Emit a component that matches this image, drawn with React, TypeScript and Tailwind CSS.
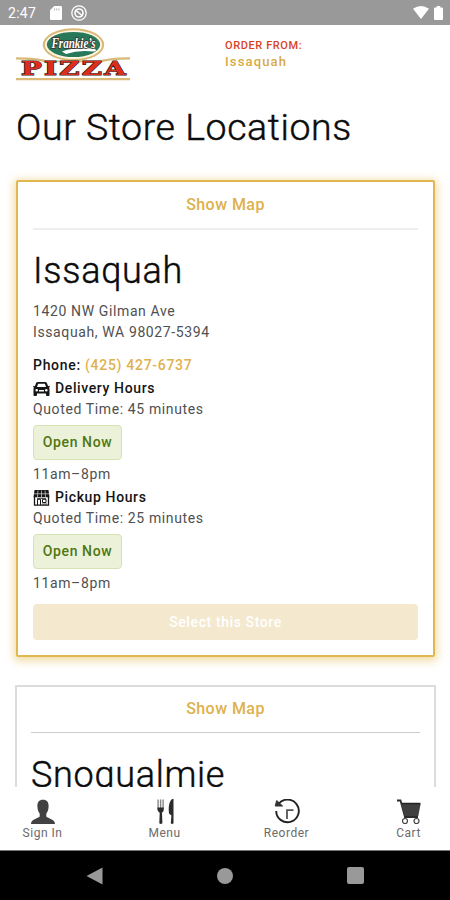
import type { ReactNode } from 'react';

type Service = {
  kind: 'delivery' | 'pickup';
  label: string;
  quoted: string;
  hours: string;
};

type Store = {
  name: string;
  address: string[];
  phone: string;
  services: Service[];
};

const issaquah: Store = {
  name: 'Issaquah',
  address: ['1420 NW Gilman Ave', 'Issaquah, WA 98027-5394'],
  phone: '(425) 427-6737',
  services: [
    { kind: 'delivery', label: 'Delivery Hours', quoted: '45 minutes', hours: '11am–8pm' },
    { kind: 'pickup', label: 'Pickup Hours', quoted: '25 minutes', hours: '11am–8pm' },
  ],
};

const StatusBar = () => (
  <div className="flex h-[25px] shrink-0 items-center bg-[#999999] px-2 text-white">
    <span className="w-[42px] text-[14px] leading-none tracking-[0.3px]">2:47</span>
    <svg className="h-[14px] w-[12px]" viewBox="0 0 12 14">
      <path d="M4.2 0H10.8Q12 0 12 1.2V12.8Q12 14 10.8 14H1.2Q0 14 0 12.8V4.2Z" fill="currentColor" />
      <path d="M4.5 2.4v2M6.7 2.4v2M8.9 2.4v2" stroke="#b5b5b5" strokeWidth="1" />
    </svg>
    <svg className="ml-[9px] h-4 w-4" viewBox="0 0 16 16" fill="none" stroke="currentColor">
      <circle cx="8" cy="8" r="7.2" strokeWidth="1.3" />
      <circle cx="8" cy="8" r="4" strokeWidth="1.6" />
      <path d="M4.5 5l7 6" strokeWidth="1.6" />
    </svg>
    <svg className="ml-auto h-[13px] w-4" viewBox="0 0 16 13">
      <path d="M0 2.8Q8-2.8 16 2.8L8 13Z" fill="currentColor" />
    </svg>
    <svg className="mr-[-1px] ml-[5px] h-[14px] w-[9px]" viewBox="0 0 9 14">
      <path d="M2.7 0H6.3V1.5H8Q9 1.5 9 2.5V13Q9 14 8 14H1Q0 14 0 13V2.5Q0 1.5 1 1.5H2.7Z" fill="currentColor" />
    </svg>
  </div>
);

const Logo = () => (
  <svg className="h-[54px] w-[114px]" viewBox="0 0 114 54">
    <ellipse cx="57.5" cy="16.7" rx="30.7" ry="16.4" fill="#d9b878" />
    <ellipse cx="57.5" cy="16.7" rx="28.6" ry="14.4" fill="#fff7e2" />
    <ellipse cx="57.5" cy="16.5" rx="26.7" ry="12.6" fill="#28785a" />
    <path d="M0 29.2Q24 29.5 31 32.5H84Q91 29.5 114 29.2V31.6Q94 32 86 34.2H29Q20 32 0 31.6Z" fill="#d9b878" />
    <path d="M46 23.5Q56 19.5 78 20.5Q82 22.5 78 23.5Q63 21.5 50 26Z" fill="#fff" />
    <text
      x="57.5" y="19.5" textAnchor="middle" fontSize="14" fontStyle="italic" fontWeight="700"
      fontFamily="Liberation Serif, serif" textLength="44" lengthAdjust="spacingAndGlyphs"
      fill="#fff" stroke="#40302d" strokeWidth="1.6" paintOrder="stroke"
    >
      Frankie’s
    </text>
    <text
      x="58.5" y="47" textAnchor="middle" fontSize="18.5" fontWeight="700" letterSpacing="1.6"
      fontFamily="DejaVu Serif, serif" textLength="107" lengthAdjust="spacingAndGlyphs"
      fill="#dd2e1d" stroke="#3a2220" strokeWidth="1.2" paintOrder="stroke"
    >
      PIZZA
    </text>
    <path d="M0 50H114V52.3H0Z" fill="#d9b878" />
  </svg>
);

const CarIcon = () => (
  <svg className="h-4 w-[17px]" viewBox="0 0 17 16">
    <path
      fillRule="evenodd"
      d="M5 1H12Q13.6 1 14.1 2.4L15.1 5.2L16.7 4.7V6.2L15.9 6.7Q16.5 7.5 16.5 8.5V14Q16.5 15 15.5 15H14Q13 15 13 14V12.6H4V14Q4 15 3 15H1.5Q.5 15 .5 14V8.5Q.5 7.5 1.1 6.7L.3 6.2V4.7L1.9 5.2L2.9 2.4Q3.4 1 5 1ZM5.1 2.7L4 6H13L11.9 2.7ZM3.7 8A1.3 1.3 0 1 0 3.7 10.6A1.3 1.3 0 1 0 3.7 8ZM13.3 8A1.3 1.3 0 1 0 13.3 10.6A1.3 1.3 0 1 0 13.3 8ZM6 9V10.6H11V9Z"
      fill="#161616"
    />
  </svg>
);

const ShopIcon = () => (
  <svg className="h-4 w-[17px]" viewBox="0 0 17 16" fill="none" stroke="#161616">
    <path d="M1.5 0H15.5L16.5 7.2H.5Z" fill="#161616" stroke="none" />
    <path d="M5 .5L4.4 7M8.5 .5V7M12 .5L12.6 7M1 3.8H16" stroke="#c6c6c6" strokeWidth=".8" />
    <path d="M1.5 7V15.2H15.5V7" strokeWidth="1.3" />
    <path d="M4.5 15V9.3H7.5V15M9.5 9.3H13V12.5H9.5Z" strokeWidth="1" />
    <path d="M4 8.5H13M9 14H14" strokeWidth=".7" />
  </svg>
);

const OpenBadge = () => (
  <div className="mt-[5px] mb-1 flex h-[35px] w-[89px] items-center justify-center rounded-[4px] border border-[#d5e2b4] bg-[#ecf2da] text-[14px] font-medium tracking-[0.6px] text-[#4f7711]">
    Open Now
  </div>
);

const ShowMap = ({ className }: { className: string }) => (
  <div className={`flex items-center justify-center text-[16px] font-medium tracking-[0.45px] text-[#ddb14d] ${className}`}>
    Show Map
  </div>
);

const StoreDetails = ({ store }: { store: Store }) => (
  <div className="text-[14px] leading-[21px] tracking-[0.62px] text-[#505050]">
    {store.address.map(line => (
      <p key={line}>{line}</p>
    ))}
    <p className="mt-3 mb-[2px] font-medium tracking-[0.7px] text-[#141414]">
      Phone: <span className="text-[#dfb14e]">{store.phone}</span>
    </p>
    {store.services.map(service => (
      <section key={service.kind} className="mb-[2px]">
        <h3 className="flex items-center gap-[5px] font-medium tracking-[0.62px] text-[#141414]">
          {service.kind === 'delivery' ? <CarIcon /> : <ShopIcon />}
          {service.label}
        </h3>
        <p>Quoted Time: {service.quoted}</p>
        <OpenBadge />
        <p>{service.hours}</p>
      </section>
    ))}
  </div>
);

const NavItem = ({ label, children }: { label: string; children: ReactNode }) => (
  <div className="flex w-[84px] flex-col items-center pl-[1px]">
    <svg className="h-[26px] w-[26px]" viewBox="0 0 26 26">{children}</svg>
    <span className="mt-[1px] text-[12px] leading-[14px] tracking-[0.5px] text-[#6b6b6b]">{label}</span>
  </div>
);

const BottomNav = () => (
  <nav className="flex h-[63px] shrink-0 justify-between bg-white pt-[12px]">
    <NavItem label="Sign In">
      <path d="M13 .8C17 .8 18.8 3.5 18.6 7.5C18.5 10.7 17.5 13 16.3 14.7V17.5C18 19.5 25 20 25 25H1C1 20 8 19.5 9.7 17.5V14.7C8.5 13 7.5 10.7 7.4 7.5C7.2 3.5 9 .8 13 .8Z" fill="#424242" />
    </NavItem>
    <NavItem label="Menu">
      <g fill="#2b2b2b">
        <path d="M6.1 .5V9.5M8.6 .5V9.5M11.1 .5V9.5" stroke="#888" strokeWidth="1.4" />
        <path d="M5.4 8.5H11.9Q12.3 12 10 13.8L10.4 24.3Q8.7 25.8 7.3 24.3L7.7 13.8Q4.9 12 5.4 8.5Z" />
        <path d="M21.5 -1V24.3Q20 25.8 18.8 24.3L19.4 16.5L17 14.5Q15.6 2 21.5 -1Z" />
      </g>
    </NavItem>
    <NavItem label="Reorder">
      <path d="M4.2 5.5A11.3 11.3 0 1 1 2.2 12" fill="none" stroke="#222" strokeWidth="1.9" />
      <path d="M2.7 1.5L8.6 7H1.2Z" fill="#333" stroke="#333" strokeLinejoin="round" />
      <path d="M13 20V11.2H19.5" fill="none" stroke="#555" strokeWidth="1.8" />
    </NavItem>
    <NavItem label="Cart">
      <path d="M1 1.5H4.5L9 18H22" fill="none" stroke="#2b2b2b" strokeWidth="1.8" />
      <path d="M5 4.5H24.7L22.3 17H8.5Z" fill="#3f3f3f" />
      <path d="M5.5 4.5H24.3" stroke="#222" strokeWidth="1.5" />
      <circle cx="9" cy="22" r="2.5" fill="white" stroke="#444" strokeWidth="1.2" />
      <circle cx="20.5" cy="22" r="2.5" fill="white" stroke="#444" strokeWidth="1.2" />
    </NavItem>
  </nav>
);

const SystemBar = () => (
  <div className="flex h-[50px] shrink-0 items-center justify-between border-t border-[#777] bg-black pr-[86px] pl-[86px]">
    <svg className="h-[18px] w-[17px]" viewBox="0 0 17 18">
      <path d="M0.5 9L16.5 .5V17.5Z" fill="#999" />
    </svg>
    <span className="h-4 w-4 rounded-full bg-[#999]" />
    <span className="h-[17px] w-[17px] rounded-[2px] bg-[#999]" />
  </div>
);

export default function App() {
  return (
    <div className="flex h-[900px] w-[450px] flex-col overflow-hidden bg-white font-[Roboto,sans-serif]">
      <StatusBar />
      <header className="flex h-[65px] shrink-0 items-start pt-[3px] pl-4">
        <Logo />
        <div className="mt-[11px] ml-[95px]">
          <p className="text-[11px] leading-[14px] font-medium tracking-[0.6px] text-[#d8431f]">ORDER FROM:</p>
          <p className="text-[13px] leading-[17px] font-medium tracking-[1.15px] text-[#d6ab45]">Issaquah</p>
        </div>
      </header>

      <main className="min-h-0 flex-1 overflow-hidden pr-[14px] pl-[15px]">
        <h1 className="mb-[15px] flex h-[75px] items-center pl-[1px] text-[37.5px] font-light tracking-[0.57px] text-[#0b0b0b] [-webkit-text-stroke:0.45px_#0b0b0b]">
          Our Store Locations
        </h1>

        <article className="mx-[1px] h-[477px] rounded-[2px] border-2 border-[#e1b74f] px-[15px] shadow-[0_2px_9px_2px_rgba(232,196,105,0.6)]">
          <ShowMap className="h-12 border-b-2 border-[#eeeeee]" />
          <h2 className="mt-[21px] mb-[10px] flex h-10 items-center text-[36px] font-light tracking-[0.7px] text-[#0b0b0b] [-webkit-text-stroke:0.45px_#0b0b0b]">
            {issaquah.name}
          </h2>
          <StoreDetails store={issaquah} />
          <button className="mt-[8px] h-9 w-full rounded-[4px] bg-[#f4e8cf] text-[14px] font-medium tracking-[0.6px] text-white">
            Select this Store
          </button>
        </article>

        <article className="mt-[28px] h-[400px] border-2 border-[#dcdcdc] px-[14px]">
          <ShowMap className="h-[46px] border-b border-[#cccccc] pb-[2px]" />
          <h2 className="mt-[20px] flex h-11 items-center text-[36px] font-light tracking-[0.7px] text-[#0b0b0b] [-webkit-text-stroke:0.45px_#0b0b0b]">
            Snoqualmie
          </h2>
        </article>
      </main>

      <BottomNav />
      <SystemBar />
    </div>
  );
}
